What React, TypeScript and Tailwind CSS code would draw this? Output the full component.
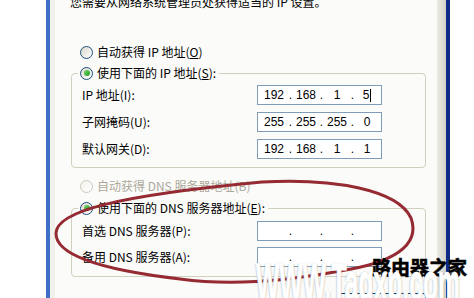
import React from "react";

const FONT = "font-['Noto_Sans_CJK_SC','Noto_Sans',sans-serif]";

function Radio({ checked, disabled }: { checked?: boolean; disabled?: boolean }) {
  return (
    <span
      className={
        "w-[13px] h-[13px] rounded-full border flex items-center justify-center shrink-0 bg-gradient-to-br " +
        (disabled
          ? "border-[#cac8bb] from-[#f3f2ec] to-white"
          : "border-[#1c5180] from-[#dcd7cb] to-white")
      }
    >
      {checked && (
        <span className="w-[6px] h-[6px] rounded-full bg-gradient-to-br from-[#6ad667] to-[#1f9b1f]" />
      )}
    </span>
  );
}

function IpBox({ parts, cursor }: { parts?: string[]; cursor?: boolean }) {
  const p = parts ?? ["", "", "", ""];
  return (
    <div className="w-[125px] h-[20px] border border-[#7f9db9] bg-white flex items-center text-[12px] leading-none text-black font-['Liberation_Sans',Arial,sans-serif]">
      <span className="w-[32px] text-center">{p[0]}</span>
      <span className="w-[1px] flex justify-center">.</span>
      <span className="w-[30px] text-center">{p[1]}</span>
      <span className="w-[1px] flex justify-center">.</span>
      <span className="w-[30px] text-center">{p[2]}</span>
      <span className="w-[1px] flex justify-center">.</span>
      <span className="flex-1 flex justify-center items-center">
        {p[3]}
        {cursor && <span className="w-[1px] h-[13px] bg-black ml-[1px]" />}
      </span>
    </div>
  );
}

function Row({ label, children }: { label: string; children: React.ReactNode }) {
  return (
    <div className="flex items-center justify-between h-[20px]">
      <span>{label}</span>
      {children}
    </div>
  );
}

export default function App() {
  return (
    <div className={"relative w-[474px] h-[298px] overflow-hidden bg-white flex text-[12px] leading-[14px] text-black " + FONT}>
      <div className="w-[46px] bg-white" />
      <div className="w-[4px] bg-[#3e70c8]" />
      <div className="w-[5px] bg-[#f1f0ea]" />
      <div className="w-[382px] bg-[#fbfbf9] flex flex-col">
        <div className="h-[14px] -mt-[5px] pl-[15px] whitespace-nowrap">
          您需要从网络系统管理员处获得适当的 IP 设置。
        </div>
        <div className="mt-[36px] h-[14px] pl-[25px] flex items-center gap-[4px]">
          <Radio />
          <span>自动获得 IP 地址(<u>O</u>)</span>
        </div>
        <fieldset className="mt-[7px] ml-[16px] mr-[11px] border border-[#d0d0bf] rounded-[4px] p-0 m-0">
          <legend className="ml-[6px] pl-[2px] pr-[3px] h-[14px]">
            <div className="flex items-center gap-[4px] h-[14px]">
              <Radio checked />
              <span>使用下面的 IP 地址(<u>S</u>):</span>
            </div>
          </legend>
          <div className="pt-[5px] pb-[8px] pl-[10px] pr-[43px] flex flex-col gap-[7px]">
            <Row label="IP 地址(I):">
              <IpBox parts={["192", "168", "1", "5"]} cursor />
            </Row>
            <Row label="子网掩码(U):">
              <IpBox parts={["255", "255", "255", "0"]} />
            </Row>
            <Row label="默认网关(D):">
              <IpBox parts={["192", "168", "1", "1"]} />
            </Row>
          </div>
        </fieldset>
        <div className="mt-[11px] h-[14px] pl-[25px] flex items-center gap-[4px] text-[#aca899]">
          <Radio disabled />
          <span>自动获得 DNS 服务器地址(B)</span>
        </div>
        <fieldset className="mt-[8px] ml-[16px] mr-[11px] border border-[#d0d0bf] rounded-[4px] p-0 m-0">
          <legend className="ml-[6px] pl-[2px] pr-[3px] h-[14px]">
            <div className="flex items-center gap-[4px] h-[14px]">
              <Radio checked />
              <span>使用下面的 DNS 服务器地址(<u>E</u>):</span>
            </div>
          </legend>
          <div className="pt-[6px] pb-[9px] pl-[10px] pr-[43px] flex flex-col gap-[6px]">
            <Row label="首选 DNS 服务器(P):">
              <IpBox />
            </Row>
            <Row label="备用 DNS 服务器(A):">
              <IpBox />
            </Row>
          </div>
        </fieldset>
        <div className="mt-[16px] flex justify-end pr-[11px]">
          <div className="w-[88px] h-[23px] border border-[#003c74] rounded-[3px] bg-gradient-to-b from-white to-[#ecebe6] flex items-center justify-center">
            高级(V)...
          </div>
        </div>
      </div>
      <div className="w-[9px] bg-gradient-to-r from-[#ecebe5] to-[#d3d1c6]" />
      <div className="w-[4px] bg-[#0e2a85]" />
      <div className="flex-1 bg-white" />

      {/* red hand-drawn ellipse annotation */}
      <svg className="absolute left-0 top-0 pointer-events-none" width="474" height="298" viewBox="0 0 474 298">
        <path
          d="M 262 182 C 335 178, 398 190, 411 218 C 421 246, 392 263, 340 271 C 292 280, 232 286, 180 279 C 120 272, 55 259, 56 233 C 57 212, 112 196, 262 182"
          fill="none"
          stroke="#952a32"
          strokeWidth="3"
          strokeLinecap="round"
        />
      </svg>

      {/* watermark */}
      <div className="absolute left-[372px] top-[257px] text-[19px] leading-none font-bold text-black font-['Noto_Sans_CJK_SC',sans-serif] whitespace-nowrap [-webkit-text-stroke:0.6px_black]">
        路由器之家
      </div>
      <div className="absolute left-[256px] top-[256px] origin-left scale-x-[0.475] text-[52px] leading-none font-bold text-white whitespace-nowrap font-['Liberation_Sans',Arial,sans-serif] [-webkit-text-stroke:1.5px_white] [text-shadow:0_0_2px_#444]">
        WWW.Tagxp.com
      </div>
    </div>
  );
}
